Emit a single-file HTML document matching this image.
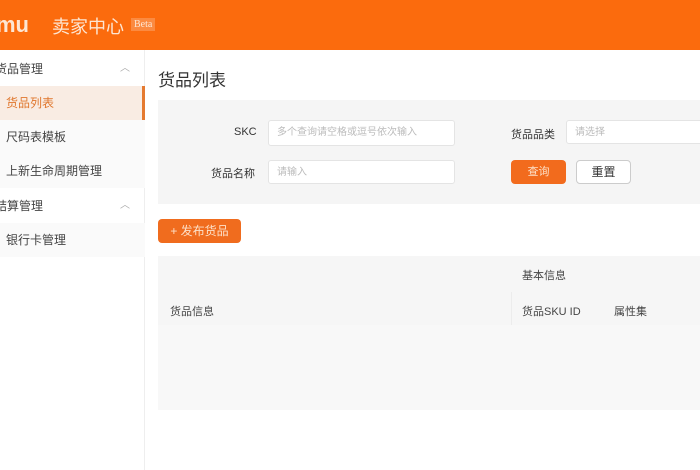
<!DOCTYPE html>
<html><head><meta charset="utf-8"><style>
*{margin:0;padding:0;box-sizing:border-box}
body{width:700px;height:470px;overflow:hidden;background:#fff;font-family:"Liberation Sans","Noto Sans CJK SC",sans-serif;position:relative;color:#333}
.a{position:absolute;white-space:nowrap}
.hd{left:0;top:0;width:700px;height:50px;background:#fb6b0d}
.sb{left:0;top:50px;width:145px;height:420px;background:#fff;border-right:1px solid #eee}
.row{left:0;width:145px;height:34px;font-size:12px;line-height:34px;color:#444}
.inp{background:#fff;border:1px solid #e4e4e4;border-radius:3px;font-size:10px;color:#bbb;padding-left:8px;line-height:24px}
.lbl{font-size:11px;color:#333}
</style></head><body>
<div class="a hd"></div>
<div class="a" style="left:-4px;top:12px;font-size:22px;font-weight:bold;color:#fde6d3">mu</div>
<div class="a" style="left:52px;top:13px;font-size:18px;color:#fde6d3">卖家中心</div>
<div class="a" style="left:131px;top:18px;font-size:10px;color:#fde6d3;background:#fb8a40;padding:1px 3px;font-family:'Liberation Serif',serif">Beta</div>
<div class="a sb"></div>
<div class="a row" style="top:52px;padding-left:0;text-indent:-5px">货品管理<span style="position:absolute;left:120px;color:#aaa;font-size:10px;text-indent:0">︿</span></div>
<div class="a row" style="top:86px;background:#f9ece3;color:#e0772e;padding-left:6px">货品列表<div style="position:absolute;right:0;top:0;width:3px;height:34px;background:#e57a30"></div></div>
<div class="a row" style="top:120px;background:#fafafa;padding-left:6px">尺码表模板</div>
<div class="a row" style="top:154px;background:#fafafa;padding-left:6px">上新生命周期管理</div>
<div class="a row" style="top:189px;padding-left:0;text-indent:-5px">结算管理<span style="position:absolute;left:120px;color:#aaa;font-size:10px;text-indent:0">︿</span></div>
<div class="a row" style="top:223px;background:#fafafa;padding-left:6px">银行卡管理</div>
<div class="a" style="left:158px;top:66px;font-size:17px;color:#333">货品列表</div>
<div class="a" style="left:158px;top:100px;width:542px;height:104px;background:#f5f5f5"></div>
<div class="a lbl" style="left:234px;top:126px">SKC</div>
<div class="a inp" style="left:268px;top:120px;width:187px;height:26px">多个查询请空格或逗号依次输入</div>
<div class="a lbl" style="left:211px;top:165px">货品名称</div>
<div class="a inp" style="left:268px;top:160px;width:187px;height:24px">请输入</div>
<div class="a lbl" style="left:511px;top:126px">货品品类</div>
<div class="a inp" style="left:566px;top:120px;width:140px;height:24px">请选择</div>
<div class="a" style="left:511px;top:160px;width:55px;height:24px;background:#f26b1d;border-radius:4px;color:#fde0c8;font-size:11px;text-align:center;line-height:24px">查询</div>
<div class="a" style="left:576px;top:160px;width:55px;height:24px;background:#fff;border:1px solid #ccc;border-radius:4px;color:#333;font-size:12px;text-align:center;line-height:22px">重置</div>
<div class="a" style="left:158px;top:219px;width:83px;height:24px;background:#f06c1e;border-radius:4px;color:#fde0c8;font-size:12px;text-align:center;line-height:24px">+ 发布货品</div>
<div class="a" style="left:158px;top:256px;width:542px;height:154px;background:#f6f6f6"></div>
<div class="a" style="left:158px;top:325px;width:542px;height:85px;background:#f8f8f8"></div>
<div class="a" style="left:511px;top:292px;width:1px;height:33px;background:#ececec"></div>
<div class="a" style="left:522px;top:267px;font-size:11px;color:#444">基本信息</div>
<div class="a" style="left:170px;top:303px;font-size:11px;color:#444">货品信息</div>
<div class="a" style="left:522px;top:303px;font-size:11px;color:#444">货品SKU ID</div>
<div class="a" style="left:614px;top:303px;font-size:11px;color:#444">属性集</div>
</body></html>
